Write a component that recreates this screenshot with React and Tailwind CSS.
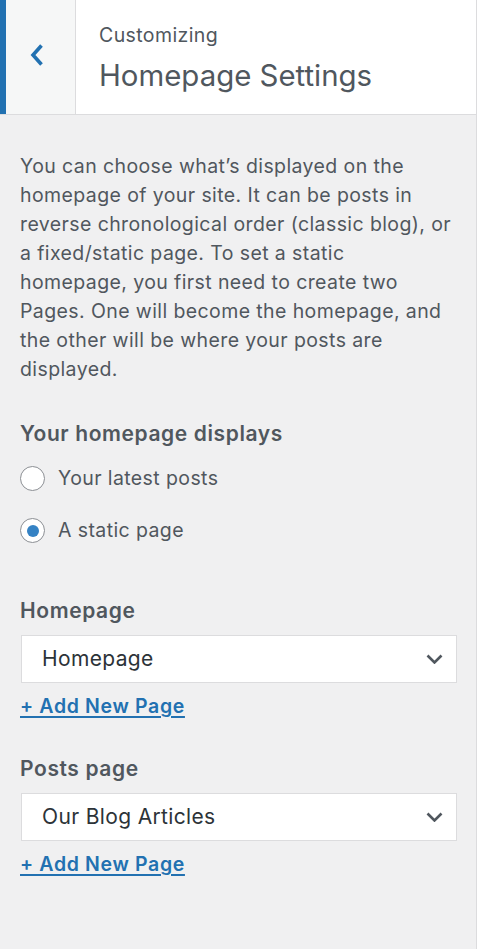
import React, { useState } from 'react';

const font = { fontFamily: 'Inter, "Liberation Sans", sans-serif' };

const BackChevron = () => (
  <svg width="14" height="24" viewBox="0 0 14 24" fill="none">
    <path d="M11.5 2.5L3 12l8.5 9.5" stroke="#2271b1" strokeWidth="3.6" strokeLinejoin="miter" />
  </svg>
);

const SelectChevron = () => (
  <svg width="17" height="10" viewBox="0 0 17 10" fill="none">
    <path d="M1.5 1.5l7 7 7-7" stroke="#50575e" strokeWidth="2.6" />
  </svg>
);

const Radio = ({ checked, label, onClick }) => (
  <label className="flex items-center gap-[13px] cursor-pointer" onClick={onClick}>
    <span className="w-[25px] h-[25px] rounded-full border-[1.5px] border-[#8c8f94] bg-white flex items-center justify-center shrink-0">
      {checked && <span className="w-[12px] h-[12px] rounded-full bg-[#3582c4]"></span>}
    </span>
    <span className="text-[19.5px] leading-[29px] tracking-[0.4px] text-[#50575e]">{label}</span>
  </label>
);

const PageSelect = ({ label, value }) => (
  <div>
    <div className="text-[21px] leading-[26px] font-semibold tracking-[0.6px] text-[#50575e]">{label}</div>
    <div className="mt-[11px] h-[48px] ml-px mr-[-1px] bg-white border-[1.5px] border-[#dcdcde] flex items-center justify-between pl-[20px] pr-[13px]">
      <span className="text-[21px] tracking-[0.35px] text-[#2c3338]">{value}</span>
      <SelectChevron />
    </div>
    <a href="#" className="mt-[9px] inline-block text-[19.5px] leading-[29px] font-semibold tracking-[0.65px] text-[#2271b1] underline underline-offset-[3px] decoration-[1.5px]">
      + Add New Page
    </a>
  </div>
);

const App = () => {
  const [display, setDisplay] = useState('page');

  return (
    <div className="w-[477px] min-h-[949px] bg-[#f0f0f1] border-r border-[#dcdcde]" style={font}>
      {/* Section header */}
      <div className="flex h-[115px] bg-white border-b border-[#dcdcde]">
        <button className="w-[76px] shrink-0 bg-[#f6f7f7] border-l-[6px] border-l-[#2271b1] border-r border-r-[#dcdcde] flex items-start pl-[24px] pt-[43px]">
          <BackChevron />
        </button>
        <div className="pl-[23px] pt-[23px] flex flex-col">
          <span className="text-[19.5px] leading-[24px] tracking-[0.4px] text-[#50575e]">Customizing</span>
          <h3 className="mt-[11px] text-[29.4px] leading-[36px] text-[#50575e]">Homepage Settings</h3>
        </div>
      </div>

      <div className="px-[20px] pt-[37px] pb-[40px]">
        <p className="text-[19.5px] leading-[29px] tracking-[0.4px] text-[#50575e]">
          You can choose what’s displayed on the homepage of your site. It can be posts in reverse chronological order (classic blog), or a fixed/static page. To set a static homepage, you first need to create two Pages. One will become the homepage, and the other will be where your posts are displayed.
        </p>

        <div className="mt-[37px] text-[21px] leading-[26px] font-semibold tracking-[0.6px] text-[#50575e]">Your homepage displays</div>
        <div className="mt-[17px] flex flex-col gap-[23px]">
          <Radio checked={display === 'posts'} label="Your latest posts" onClick={() => setDisplay('posts')} />
          <Radio checked={display === 'page'} label="A static page" onClick={() => setDisplay('page')} />
        </div>

        <div className="mt-[53px]">
          <PageSelect label="Homepage" value="Homepage" />
        </div>
        <div className="mt-[35px]">
          <PageSelect label="Posts page" value="Our Blog Articles" />
        </div>
      </div>
    </div>
  );
};

export default App;
